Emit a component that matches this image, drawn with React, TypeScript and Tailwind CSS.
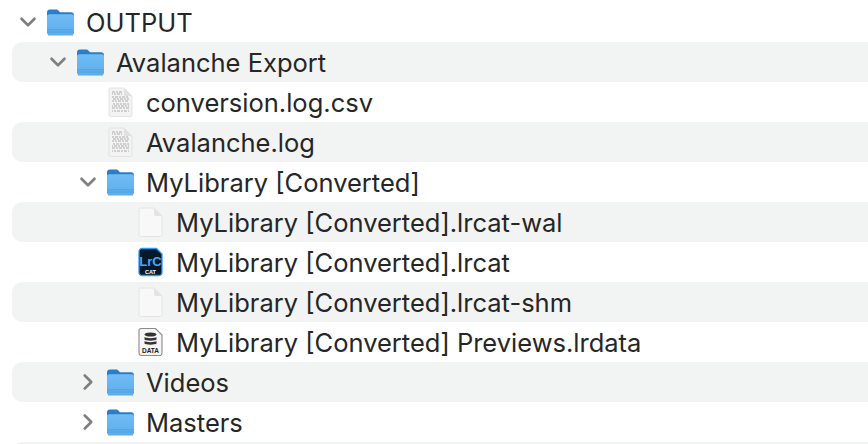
import { ChevronDown, ChevronRight } from "lucide-react";

function FolderIcon() {
  return (
    <svg width="30" height="30" viewBox="0 0 30 30" className="shrink-0">
      <defs>
        <linearGradient id="folderBody" x1="0" y1="0" x2="0" y2="1">
          <stop offset="0" stopColor="#71bdf5" />
          <stop offset="1" stopColor="#5dadec" />
        </linearGradient>
      </defs>
      <path d="M2 5.500C2 3.600 3 2.500 5 2.500h6c1.200 0 1.800.4 2.600 1.200L15 5.300h11c1.900 0 3 1 3 3V13H2z" fill="#2b7dc8" />
      <path d="M2 9.500C2 8 3 7.200 4.500 7.200h22c1.500 0 2.500.8 2.500 2.300V25.500c0 1.700-1 2.600-2.600 2.600H4.600C3 28.100 2 27.200 2 25.500z" fill="url(#folderBody)" />
      <path d="M2 22.800h27M2 25h27" stroke="#4a9bdc" strokeWidth="0.7" />
      <path d="M3 28.600h25" stroke="#7d8a96" strokeWidth="0.8" opacity="0.6" />
    </svg>
  );
}

function TextDocIcon() {
  const lines = [6, 8, 11, 13, 15, 18, 20, 22, 25];
  return (
    <svg width="30" height="32" viewBox="-1 0 30 32" className="shrink-0">
      <path d="M3 3.500A1.500 1.500 0 0 1 4.500 2H18l8 8v19a1.500 1.500 0 0 1-1.500 1.500h-20A1.500 1.500 0 0 1 3 29z" fill="#f3f3f3" stroke="#dedede" strokeWidth="0.8" />
      <path d="M18 2v6.500A1.500 1.500 0 0 0 19.500 10H26z" fill="#e0e0e0" />
      {lines.map((y, i) => (
        <path key={y} d={`M6 ${y}H${i < 2 ? 16 : 23}`} stroke="#ababab" strokeWidth="1" strokeDasharray="3 1 2 1" strokeDashoffset={i * 2} />
      ))}
    </svg>
  );
}

function BlankDocIcon() {
  return (
    <svg width="30" height="32" viewBox="-1 0 30 32" className="shrink-0">
      <path d="M3 3.500A1.500 1.500 0 0 1 4.500 2H18l8 8v19a1.500 1.500 0 0 1-1.500 1.500h-20A1.500 1.500 0 0 1 3 29z" fill="#f8f8f8" stroke="#dfdfdf" strokeWidth="0.8" />
      <path d="M18 2v6.500A1.500 1.500 0 0 0 19.500 10H26z" fill="#e4e4e4" />
    </svg>
  );
}

function LrcIcon() {
  return (
    <svg width="30" height="32" viewBox="-1 0 30 32" className="shrink-0">
      <path d="M6 2.500h14.500L26 8v18.500a3 3 0 0 1-3 3H6a3 3 0 0 1-3-3v-21a3 3 0 0 1 3-3z" fill="#04192c" stroke="#2f9bf0" strokeWidth="1.300" />
      <text x="14.500" y="19.500" textAnchor="middle" fill="#4aa6f6" fontSize="13" fontWeight="700" fontFamily="'Liberation Sans', sans-serif">LrC</text>
      <text x="14.500" y="28" textAnchor="middle" fill="#ffffff" fontSize="5.500" fontWeight="700" fontFamily="'Liberation Sans', sans-serif">CAT</text>
    </svg>
  );
}

function DataIcon() {
  return (
    <svg width="30" height="32" viewBox="-1 0 30 32" className="shrink-0">
      <path d="M5 2.500h14.500L26 9v18a2.500 2.500 0 0 1-2.500 2.500h-18A2.500 2.500 0 0 1 3 27V4.500a2 2 0 0 1 2-2z" fill="#f6f6f6" stroke="#8a8a8a" strokeWidth="1.100" />
      <ellipse cx="14.500" cy="8.500" rx="6" ry="2" fill="#333333" />
      <path d="M8.500 11c1 1.500 11 1.500 12 0v2.500c-1 1.500-11 1.500-12 0zM8.500 15c1 1.500 11 1.500 12 0v2.500c-1 1.500-11 1.500-12 0z" fill="#333333" />
      <text x="14.500" y="27" textAnchor="middle" fill="#222222" fontSize="6.500" fontWeight="700" fontFamily="'Liberation Sans', sans-serif">DATA</text>
    </svg>
  );
}

const rows = [
  { name: "OUTPUT", indent: "pl-[6px]", chevron: "down", icon: <FolderIcon /> },
  { name: "Avalanche Export", indent: "pl-[36px]", chevron: "down", icon: <FolderIcon /> },
  { name: "conversion.log.csv", indent: "pl-[66px]", icon: <TextDocIcon /> },
  { name: "Avalanche.log", indent: "pl-[66px]", icon: <TextDocIcon /> },
  { name: "MyLibrary [Converted]", indent: "pl-[66px]", chevron: "down", icon: <FolderIcon /> },
  { name: "MyLibrary [Converted].lrcat-wal", indent: "pl-[96px]", icon: <BlankDocIcon /> },
  { name: "MyLibrary [Converted].lrcat", indent: "pl-[96px]", icon: <LrcIcon /> },
  { name: "MyLibrary [Converted].lrcat-shm", indent: "pl-[96px]", icon: <BlankDocIcon /> },
  { name: "MyLibrary [Converted] Previews.lrdata", indent: "pl-[96px]", icon: <DataIcon /> },
  { name: "Videos", indent: "pl-[66px]", chevron: "right", icon: <FolderIcon /> },
  { name: "Masters", indent: "pl-[66px]", chevron: "right", icon: <FolderIcon /> },
];

export default function App() {
  return (
    <div className="w-[868px] h-[444px] overflow-hidden bg-white pt-[2px] pl-[12px] font-['Inter',sans-serif] text-[25.5px] text-[#262626]">
      {rows.map((row, i) => (
        <div key={row.name} className={`flex items-center h-[40px] rounded-l-[10px] ${row.indent} ${i % 2 === 1 ? "bg-[#f2f3f3]" : ""}`}>
          <span className="w-[20px] mr-[7px] flex justify-center shrink-0">
            {row.chevron === "down" && <ChevronDown size={26} strokeWidth={2.400} className="text-[#7f7f7f] shrink-0" />}
            {row.chevron === "right" && <ChevronRight size={26} strokeWidth={2.400} className="text-[#7f7f7f] shrink-0" />}
          </span>
          {row.icon}
          <span className="ml-[11px] pt-[2px] whitespace-nowrap leading-none">{row.name}</span>
        </div>
      ))}
      <div className="h-[40px] rounded-tl-[10px] bg-[#f2f3f3]" />
    </div>
  );
}
